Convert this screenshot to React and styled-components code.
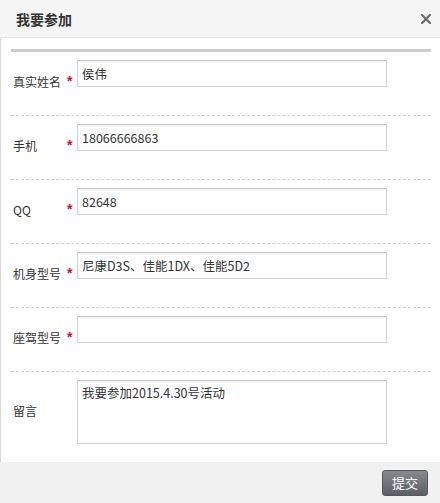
import React from 'react';
import styled, { createGlobalStyle } from 'styled-components';

const GlobalStyle = createGlobalStyle`
    html, body {
        margin: 0;
        padding: 0;
        background: #fff;
    }
    body {
        font-family: "Microsoft YaHei", "Noto Sans CJK SC", "Liberation Sans", sans-serif;
        font-size: 12px;
        color: #333;
    }
`;

const fields = [
    { label: '真实姓名', value: '侯伟', required: true },
    { label: '手机', value: '18066666863', required: true },
    { label: 'QQ', value: '82648', required: true },
    { label: '机身型号', value: '尼康D3S、佳能1DX、佳能5D2', required: true },
    { label: '座驾型号', value: '', required: true },
];

export default function App() {
    return (
        <>
            <GlobalStyle />
            <Dialog>
                <Header>
                    <Title>我要参加</Title>
                    <Close aria-label="关闭">
                        <svg width="10" height="10" viewBox="0 0 10 10">
                            <path
                                d="M1 1 L9 9 M9 1 L1 9"
                                stroke="#6b6b6b"
                                strokeWidth="2.2"
                                strokeLinecap="square"
                            />
                        </svg>
                    </Close>
                </Header>
                <Body>
                    <Rule />
                    {fields.map((f) => (
                        <Row key={f.label}>
                            <Label>
                                <LabelText>{f.label}</LabelText>
                                {f.required && <Star>*</Star>}
                            </Label>
                            <Input defaultValue={f.value} />
                        </Row>
                    ))}
                    <Row last>
                        <Label>
                            <LabelText tall>留言</LabelText>
                        </Label>
                        <TextArea defaultValue="我要参加2015.4.30号活动" />
                    </Row>
                </Body>
                <Footer>
                    <Submit>提交</Submit>
                </Footer>
            </Dialog>
        </>
    );
}

const Dialog = styled.div`
    width: 440px;
    height: 503px;
    display: flex;
    flex-direction: column;
    background: #fff;
`;

const Header = styled.div`
    height: 37px;
    flex: none;
    display: flex;
    align-items: center;
    justify-content: space-between;
    padding: 0 9px 0 16px;
    background: #f5f5f5;
    border-bottom: 1px solid #e3e3e3;
`;

const Title = styled.h3`
    margin: 0;
    font-size: 14px;
    font-weight: bold;
    color: #333;
    line-height: 20px;
`;

const Close = styled.button`
    border: 0;
    background: none;
    padding: 0;
    display: flex;
    cursor: pointer;
`;

const Body = styled.div`
    flex: 1;
    padding: 11px 9px 0 10px;
    border-left: 1px solid #d8d8d8;
`;

const Rule = styled.div`
    height: 3px;
    background: #cccccc;
`;

const Row = styled.div`
    display: flex;
    align-items: flex-start;
    height: ${(p) => (p.last ? 'auto' : '55px')};
    padding-top: 8px;
    border-bottom: ${(p) => (p.last ? 'none' : '1px dashed #cfcfcf')};
`;

const Label = styled.div`
    width: 64px;
    flex: none;
    display: flex;
    align-items: flex-start;
    padding-left: 2px;
`;

const LabelText = styled.span`
    margin-top: ${(p) => (p.tall ? '23px' : '14px')};
    line-height: 16px;
    font-size: 12px;
    color: #333;
    width: 54px;
`;

const Star = styled.span`
    margin-top: 13px;
    line-height: 16px;
    font-size: 14px;
    font-weight: bold;
    font-family: "Liberation Sans", sans-serif;
    color: #d40f2c;
`;

const fieldBase = `
    box-sizing: border-box;
    width: 310px;
    border: 1px solid #d3d3d3;
    border-top-color: #c6c6c6;
    box-shadow: inset 0 1px 2px rgba(0, 0, 0, 0.08);
    font-family: "Microsoft YaHei", "Noto Sans CJK SC", "Liberation Sans", sans-serif;
    font-size: 12.5px;
    color: #333;
    outline: none;
    background: #fff;
`;

const Input = styled.input`
    ${fieldBase}
    height: 27px;
    padding: 0 4px;
`;

const TextArea = styled.textarea`
    ${fieldBase}
    height: 64px;
    padding: 3px 4px;
    resize: none;
    line-height: 18px;
`;

const Footer = styled.div`
    height: 41px;
    flex: none;
    background: #f1f1f1;
    display: flex;
    align-items: center;
    justify-content: flex-end;
    padding: 0 12px;
`;

const Submit = styled.button`
    width: 46px;
    height: 26px;
    border: 1px solid #55585c;
    border-radius: 3px;
    background: linear-gradient(#868a8f, #5c5f64);
    color: #fff;
    font-family: "Microsoft YaHei", "Noto Sans CJK SC", sans-serif;
    font-size: 13px;
    padding: 0;
    cursor: pointer;
`;
